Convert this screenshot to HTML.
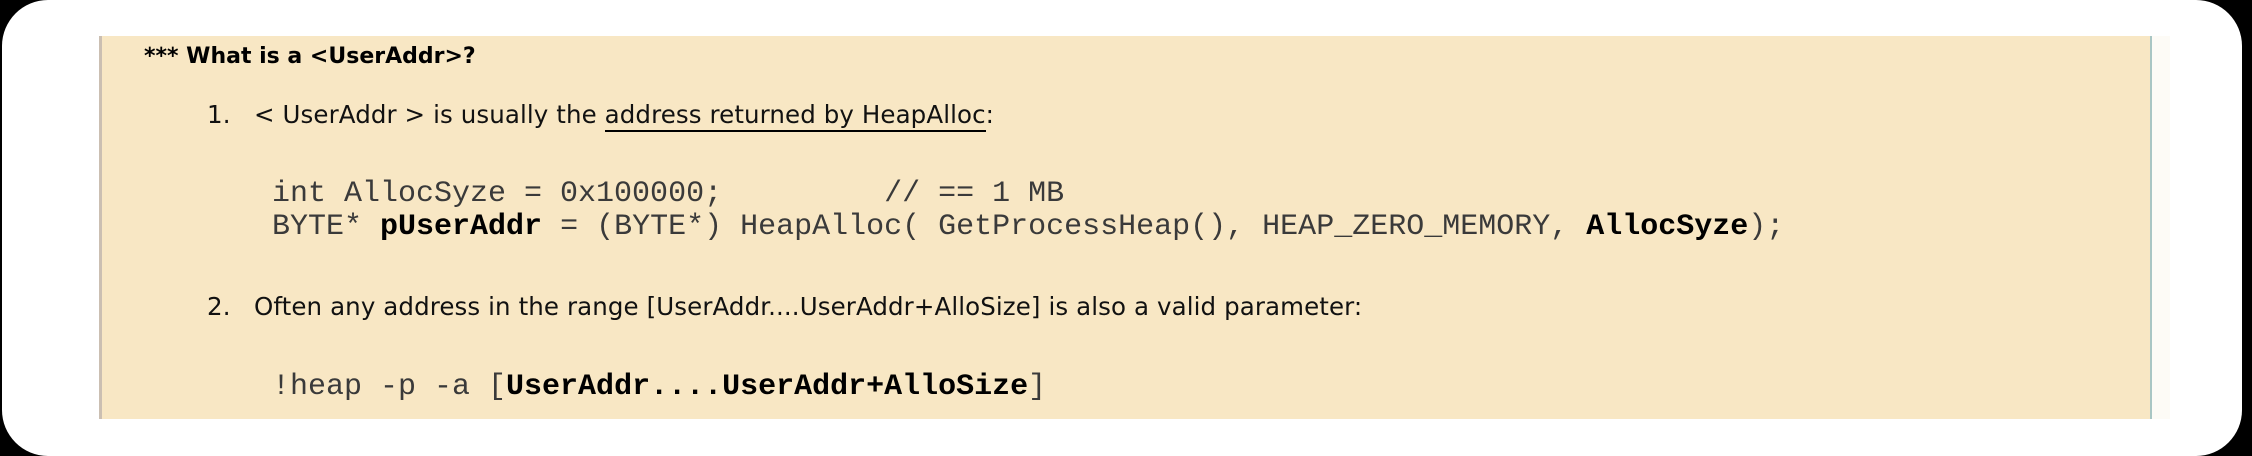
<!DOCTYPE html>
<html><head><meta charset="utf-8"><style>
html,body{margin:0;padding:0;width:2252px;height:456px;background:#000;overflow:hidden}
.card{position:absolute;left:2px;top:0;width:2240px;height:456px;background:#fff;border-radius:46px}
.panel{position:absolute;left:99px;top:36px;width:2048px;height:383px;background:#f8e7c4;border-left:3px solid #cbbfb2;border-right:2px solid #a9c6c4}
.edge{position:absolute;left:2152px;top:36px;width:18px;height:383px;background:#fdfbf6}
.t{position:absolute;white-space:pre;color:#111;font-family:"DejaVu Sans","Liberation Sans",sans-serif;line-height:1}
.h{font-weight:bold;font-size:22px;color:#000}
.p{font-size:24.5px;letter-spacing:0.1px}
.c{font-family:"Liberation Mono",monospace;font-size:30px;color:#3a3a3a}
.c b{color:#000}
u{text-decoration:none;border-bottom:2px solid #000;padding-bottom:1px}
</style></head><body>
<div class="card"></div>
<div class="panel"></div>
<div class="edge"></div>
<div class="t h" style="left:144px;top:46px">*** What is a &lt;UserAddr&gt;?</div>
<div class="t p" style="left:207px;top:103px">1.</div>
<div class="t p" style="left:254px;top:103px">&lt; UserAddr &gt; is usually the <u>address returned by HeapAlloc</u>:</div>
<div class="t c" style="left:272px;top:179px">int AllocSyze = 0x100000;         // == 1 MB</div>
<div class="t c" style="left:272px;top:212px">BYTE* <b>pUserAddr</b> = (BYTE*) HeapAlloc( GetProcessHeap(), HEAP_ZERO_MEMORY, <b>AllocSyze</b>);</div>
<div class="t p" style="left:207px;top:295px">2.</div>
<div class="t p" style="left:254px;top:295px">Often any address in the range [UserAddr....UserAddr+AlloSize] is also a valid parameter:</div>
<div class="t c" style="left:272px;top:372px">!heap -p -a [<b>UserAddr....UserAddr+AlloSize</b>]</div>
</body></html>
